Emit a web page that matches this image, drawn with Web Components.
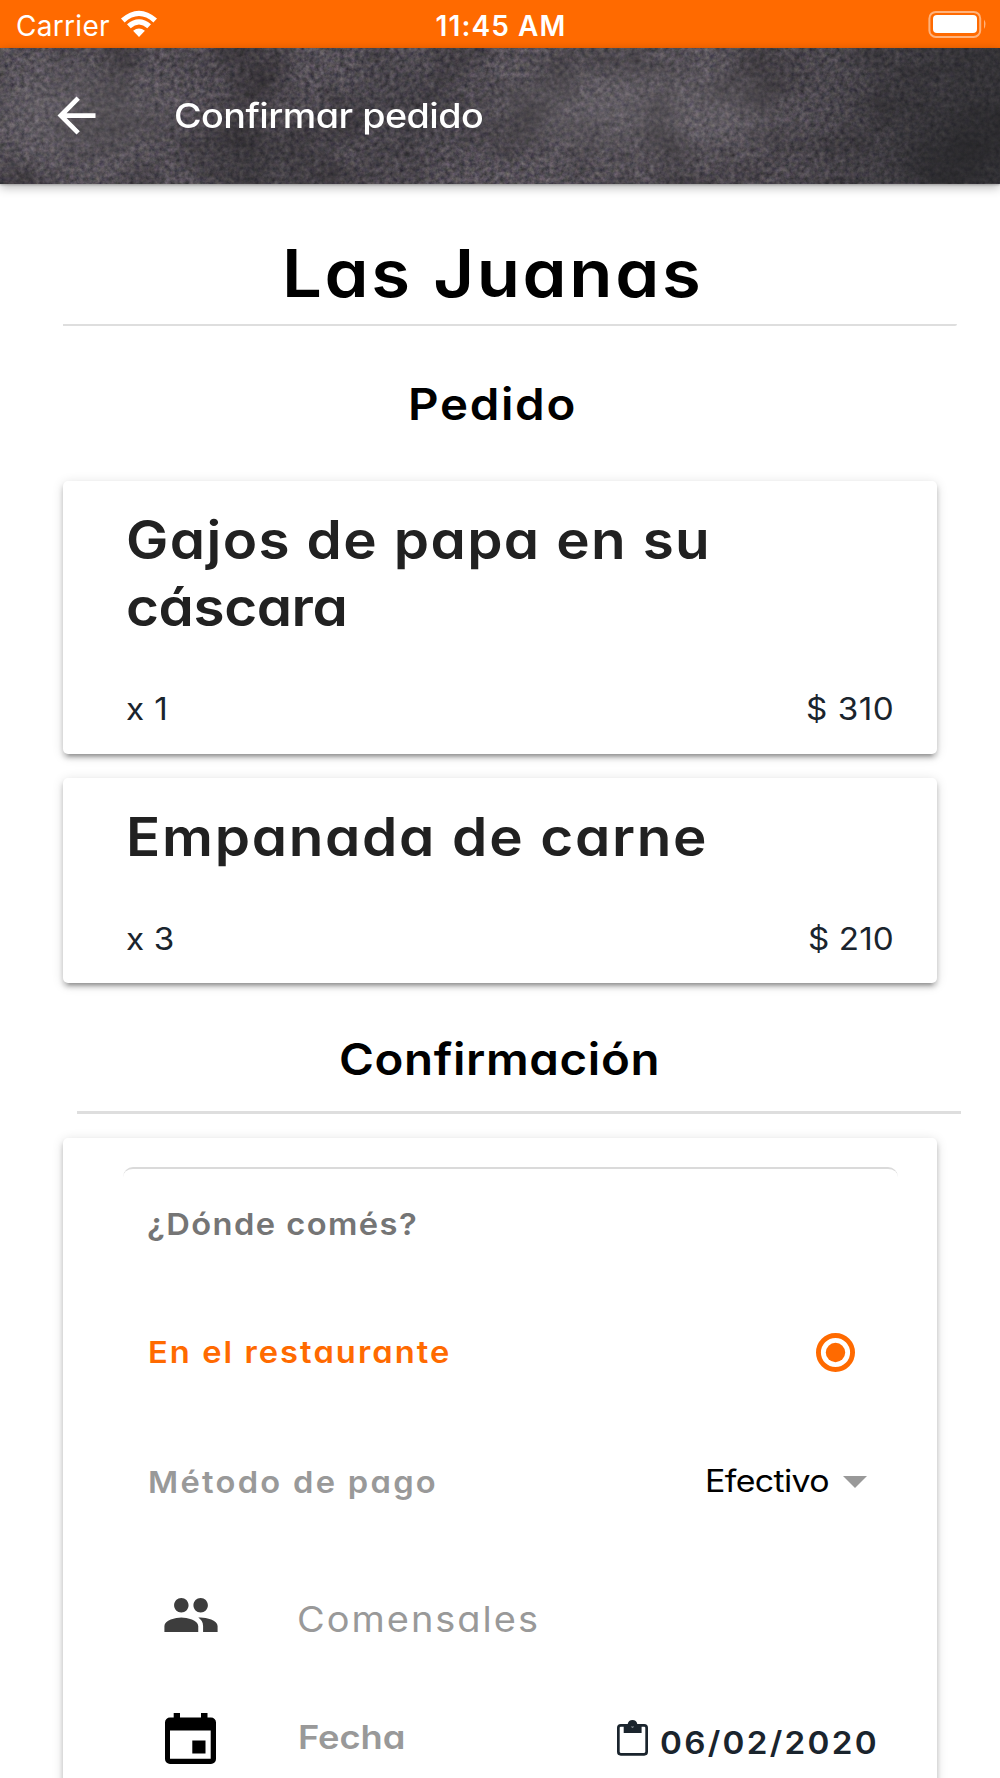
<!DOCTYPE html>
<html lang="es">
<head>
<meta charset="utf-8">
<title>Confirmar pedido</title>
<style>
html,body{margin:0;padding:0;background:#fff}
body{width:1000px;height:1778px;overflow:hidden;font-family:Inter,Lato,"Open Sans",sans-serif;color:#000}
</style>
</head>
<body>
<order-screen></order-screen>
<script>
const define = (name, html, setup) => {
  const tpl = document.createElement('template');
  tpl.innerHTML = html;
  customElements.define(name, class extends HTMLElement {
    constructor() {
      super();
      this.attachShadow({ mode: 'open' }).append(tpl.content.cloneNode(true));
    }
    connectedCallback() { if (setup) setup(this, this.shadowRoot); }
  });
};

/* One line of text, slightly extended and tracked out to an exact ink width. */
const ctx = document.createElement('canvas').getContext('2d');
define('tracked-text', `
<style>
:host{display:block;flex:none;line-height:1;white-space:nowrap}
span{display:block;transform-origin:0 0}
</style><span><slot></slot></span>`, (el, root) => {
  const box = +el.getAttribute('size'), w = +el.getAttribute('w');
  const system = el.hasAttribute('system');
  const weight = el.getAttribute('weight') || '400';
  const size = system ? box : box * 0.985;
  const stretch = system ? 1 : +(el.getAttribute('stretch') || 1.07);
  const text = el.textContent;
  const type = `font:${weight} ${size}px/${box}px Inter,"Open Sans",sans-serif;font-feature-settings:"liga" 0,"calt" 0${system ? '' : ',"cv11" 1'};`;
  const probe = document.createElement('span');
  probe.style.cssText = type + 'display:inline-block;white-space:pre';
  probe.textContent = text;
  document.body.append(probe);
  const advance = probe.getBoundingClientRect().width;
  probe.remove();
  ctx.font = `${weight} ${size}px Inter, "Open Sans", sans-serif`;
  const left = -ctx.measureText(text[0]).actualBoundingBoxLeft;
  const last = ctx.measureText(text[text.length - 1]);
  const right = last.width - last.actualBoundingBoxRight;
  el.style.cssText += `;${type}width:${w}px;height:${box}px`;
  const span = root.querySelector('span');
  span.style.width = w / stretch + 'px';
  span.style.letterSpacing = (w / stretch - (advance - left - right)) / (text.length - 1) + 'px';
  span.style.marginLeft = -left * stretch + 'px';
  if (!system) span.style.transform = `translateY(${box * 0.05 - 1}px) scaleX(${stretch})`;
});

define('status-bar', `
<style>
:host{display:grid;grid-template-columns:1fr auto 1fr;align-items:center;height:48px;box-sizing:border-box;padding:0 13px 0 17px;background:#ff6a00;color:#fff}
.l{display:flex;align-items:center;gap:11px}
.r{display:flex;justify-content:flex-end}
svg{display:block}
tracked-text{margin-top:3px}
.time{margin-left:-4px}
</style>
<div class="l"><tracked-text system size="28" w="92" weight="370">Carrier</tracked-text>
<svg width="38" height="28" viewBox="0 0 38 28" fill="#fff"><path d="M1 8.6Q19-7.2 37 8.6L33.4 12.4Q19-.2 4.6 12.4Z"/><path d="M7 14.3Q19 4.2 31 14.3L27.3 18.2Q19 11 10.7 18.2Z"/><path d="M13.1 20.8Q19 16.2 24.9 20.8L19 27Z"/></svg></div>
<tracked-text class="time" system size="28" w="127" weight="580">11:45 AM</tracked-text>
<div class="r"><svg width="60" height="28" viewBox="0 0 60 28"><rect x="2.4" y="1.9" width="50.8" height="25" rx="6.5" fill="none" stroke="#ffb37d" stroke-width="2"/><rect x="6" y="5" width="44" height="18" rx="4" fill="#fff"/><path d="M57 9.5Q60 14 57 19Z" fill="#ffb37d"/></svg></div>`);

define('app-bar', `
<style>
:host{display:grid;height:135.5px;color:#fff;box-shadow:0 3px 10px rgba(0,0,0,.3),0 1px 2px rgba(0,0,0,.22);position:relative}
.stone,.row{grid-area:1/1}
.stone{display:block;width:1000px;height:135.5px}
.row{display:flex;align-items:center;padding-left:48px;gap:70.500px;isolation:isolate}
tracked-text{margin-bottom:1.500px}
</style>
<svg class="stone" viewBox="0 0 1000 136" preserveAspectRatio="none">
<defs>
<filter id="fine" x="0" y="0" width="100%" height="100%" color-interpolation-filters="sRGB"><feTurbulence type="fractalNoise" baseFrequency=".2" numOctaves="4" seed="8"/><feColorMatrix values=".36 .06 0 0 .12  .31 .11 0 0 .1  .31 .04 .08 0 .125  0 0 0 0 1"/></filter>
<filter id="coarse" x="0" y="0" width="100%" height="100%" color-interpolation-filters="sRGB"><feTurbulence type="fractalNoise" baseFrequency=".014 .018" numOctaves="5" seed="34"/><feColorMatrix values="0 0 0 0 .14  0 0 0 0 .13  0 0 0 0 .14  1.1 0 0 0 -.42"/></filter>
<filter id="soft" x="-100%" y="-100%" width="300%" height="300%" color-interpolation-filters="sRGB"><feGaussianBlur stdDeviation="24"/></filter>
<linearGradient id="edge"><stop offset=".76" stop-color="#202123" stop-opacity="0"/><stop offset=".92" stop-color="#202123" stop-opacity=".45"/><stop offset="1" stop-color="#202123" stop-opacity=".6"/></linearGradient>
</defs>
<rect width="1000" height="136" filter="url(#fine)"/>
<rect width="1000" height="136" filter="url(#coarse)"/>
<g filter="url(#soft)"><ellipse cx="255" cy="120" rx="60" ry="28" fill="#222124" opacity=".5"/><ellipse cx="405" cy="60" rx="60" ry="50" fill="#222124" opacity=".3"/><ellipse cx="210" cy="5" rx="50" ry="18" fill="#222124" opacity=".4"/><ellipse cx="80" cy="65" rx="90" ry="45" fill="#8a868a" opacity=".25"/><ellipse cx="640" cy="60" rx="150" ry="45" fill="#8a868a" opacity=".25"/><ellipse cx="945" cy="110" rx="50" ry="40" fill="#1f2022" opacity=".45"/></g>
<rect width="1000" height="136" fill="url(#edge)"/>
</svg>
<div class="row">
<svg width="57" height="57" viewBox="0 0 24 24" fill="#fff"><path d="M20 11H7.83l5.59-5.59L12 4l-8 8 8 8 1.41-1.41L7.83 13H20v-2z"/></svg>
<tracked-text size="34.5" w="307" weight="450" stretch="1.11">Confirmar pedido</tracked-text></div>`);

define('rule-line', `
<style>:host{display:block;height:2px;background:#dedede}</style>`);

define('paper-card', `
<style>
:host{display:block;box-sizing:border-box;background:#fff;border-radius:5px;box-shadow:0 7px 3px -5px rgba(0,0,0,.2),0 4px 5px rgba(0,0,0,.2),0 2px 12px rgba(0,0,0,.14)}
</style><slot></slot>`);

define('dish-card', `
<style>
:host{display:block}
paper-card{height:100%;padding:30.5px 45px 0 63px}
.name{display:flex;flex-direction:column;gap:14px;padding-left:2px;color:#212121}
.foot{display:flex;justify-content:space-between;margin-top:59.500px;color:#1a242d}
</style>
<paper-card><div class="name"><slot></slot></div>
<div class="foot"><slot name="qty"></slot><slot name="price"></slot></div></paper-card>`);

define('people-icon', `<style>:host,svg{display:block}</style>
<svg width="58" height="58" viewBox="0 0 24 24" fill="#3d3d3d"><path d="M16 11c1.66 0 2.99-1.34 2.99-3S17.66 5 16 5s-3 1.34-3 3 1.34 3 3 3zm-8 0c1.66 0 2.99-1.34 2.99-3S9.66 5 8 5 5 6.34 5 8s1.34 3 3 3zm0 2c-2.33 0-7 1.17-7 3.5V19h14v-2.500c0-2.330-4.670-3.500-7-3.500zm8 0c-.29 0-.62.02-.97.05 1.16.84 1.970 1.970 1.970 3.450V19h6v-2.500c0-2.330-4.670-3.500-7-3.500z"/></svg>`);

define('calendar-icon', `<style>:host,svg{display:block}</style>
<svg width="51" height="51" viewBox="0 0 51 51"><path fill-rule="evenodd" d="M8.700 0h6.300v4.500h21V0h6.500v4.500h3.500a5 5 0 0 1 5 5V46a5 5 0 0 1-5 5H5a5 5 0 0 1-5-5V9.500a5 5 0 0 1 5-5h3.700zM5 17.500v28.300h40.700V17.500zM27.300 27.500h13.200v13H27.300z"/></svg>`);

define('clipboard-icon', `<style>:host,svg{display:block}</style>
<svg width="31" height="36" viewBox="0 0 31 36"><rect x="1.350" y="5.300" width="28.300" height="29" rx="2.500" fill="none" stroke="#1a242d" stroke-width="2.700"/><path fill="#1a242d" fill-rule="evenodd" d="M6.700 4h4a4.900 4.900 0 0 1 9.600 0h4.300v9H6.700zM15.500 4a1.800 1.800 0 1 0 0 3.600a1.800 1.800 0 0 0 0-3.600z"/></svg>`);

define('order-form', `
<style>
:host{display:block}
paper-card{height:680px;padding:29px 39px 0 60px}
.head{box-sizing:border-box;height:109px;border-top:2px solid #dadada;border-radius:10px;padding:38px 0 0 25px;color:#757575}
.row{display:flex;align-items:center;padding-left:27px;color:#999}
.sp{flex:1}
svg{display:block}
</style>
<paper-card>
<div class="head"><tracked-text size="31" w="268" weight="590">¿Dónde comés?</tracked-text></div>
<div class="row" style="height:129px;margin-top:12px;color:#ff6a00;padding-right:43px"><tracked-text style="margin-bottom:5px" size="31" w="298" weight="590">En el restaurante</tracked-text><span class="sp"></span><svg width="39" height="39" viewBox="0 0 39 39"><circle cx="19.500" cy="19.500" r="17.050" fill="none" stroke="#ff6a00" stroke-width="4.900"/><circle cx="19.500" cy="19.500" r="9.700" fill="#ff6a00"/></svg></div>
<div class="row" style="height:130px;padding-right:31px"><tracked-text style="margin-bottom:2.600px" size="31" w="285" weight="590">Método de pago</tracked-text><span class="sp"></span><tracked-text style="margin:0 14.500px 4.500px 0;color:#000" size="31" w="121" weight="370" stretch="1.11">Efectivo</tracked-text><svg width="24" height="12" viewBox="0 0 24 12" fill="#999"><path d="M0 0H24L12 12Z"/></svg></div>
<div class="row" style="height:136px;padding-left:38.500px"><people-icon></people-icon><tracked-text style="margin:8px 0 0 79.500px" size="36" w="237" weight="420">Comensales</tracked-text></div>
<div class="row" style="height:110px;padding:0 23px 0 42px"><calendar-icon></calendar-icon><tracked-text style="margin:0 0 2px 84px" size="33.500" w="103" weight="570" stretch="1.1">Fecha</tracked-text><span class="sp"></span><clipboard-icon></clipboard-icon><tracked-text style="margin:7px 0 0 13.500px;color:#1a242d" size="31.500" w="214" weight="600">06/02/2020</tracked-text></div>
</paper-card>`);

define('order-screen', `
<style>
:host{display:block}
main{display:flex;flex-direction:column;padding:54px 63px 0;box-sizing:border-box}
</style>
<status-bar></status-bar>
<app-bar></app-bar>
<main>
<tracked-text style="margin-left:223.500px" size="67" w="412" weight="600">Las Juanas</tracked-text>
<rule-line style="margin:19.500px -20px 0 0;border-radius:0 0 5px 0"></rule-line>
<tracked-text style="margin:55px 0 0 348px" size="45" w="163" weight="580">Pedido</tracked-text>
<dish-card style="height:273px;margin-top:55px"><tracked-text size="53.700" w="578" weight="560">Gajos de papa en su</tracked-text><tracked-text size="53.700" w="216" weight="560">cáscara</tracked-text><tracked-text slot="qty" size="31.500" w="39" weight="440">x 1</tracked-text><tracked-text slot="price" size="31.500" w="85" weight="440">$ 310</tracked-text></dish-card>
<dish-card style="height:205px;margin-top:24px"><tracked-text style="margin-left:1px" size="53.700" w="576" weight="560">Empanada de carne</tracked-text><tracked-text slot="qty" size="31.500" w="47" weight="440">x 3</tracked-text><tracked-text slot="price" size="31.500" w="83" weight="440">$ 210</tracked-text></dish-card>
<tracked-text style="margin:53px 0 0 278px" size="45" w="316" weight="580">Confirmación</tracked-text>
<rule-line style="margin:30px -24px 0 14px;height:2.500px"></rule-line>
<order-form style="margin-top:24.500px"></order-form>
</main>`);
</script>
</body>
</html>
